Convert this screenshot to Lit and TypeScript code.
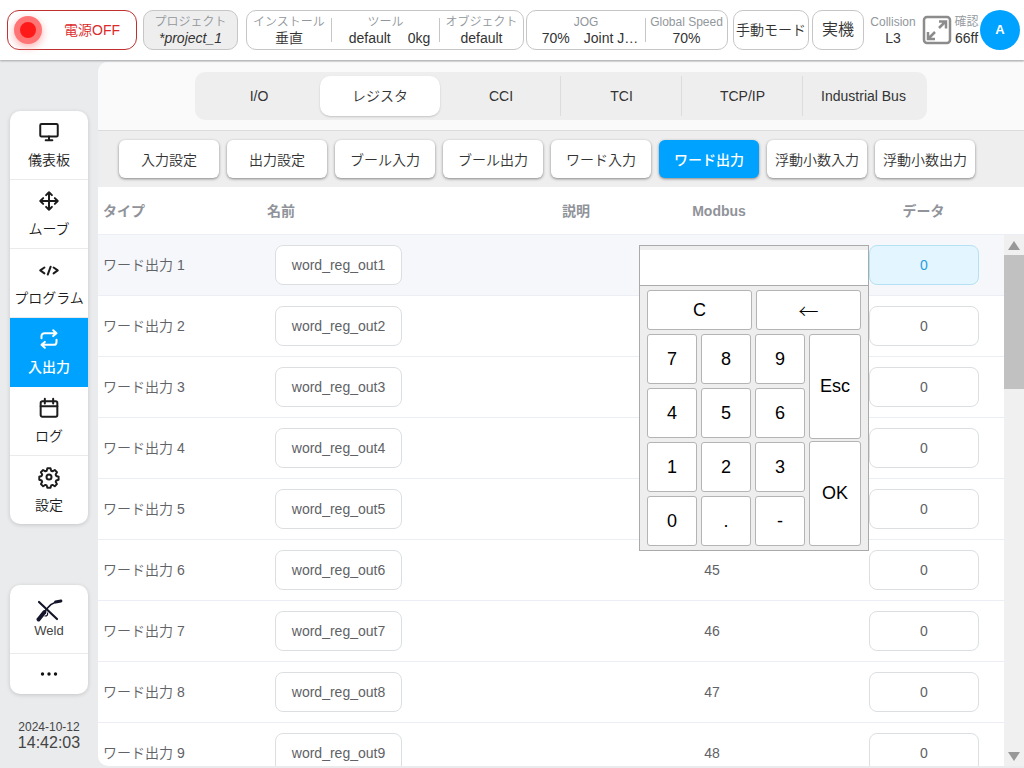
import { LitElement, html, css, svg } from "lit";
import { customElement, property, state } from "lit/decorators.js";
import { classMap } from "lit/directives/class-map.js";

const icons = {
  monitor: svg`<rect x="1.500" y="2.500" width="21" height="15" rx="1.500"/><path d="M12 17.500v4M8 22h8"/>`,
  move: svg`<path d="M12 1.500v21M1.500 12h21M8.500 5 12 1.500 15.500 5M8.500 19l3.500 3.500 3.500-3.500M5 8.500 1.500 12 5 15.500M19 8.500l3.500 3.500-3.500 3.500"/>`,
  code: svg`<path d="M6.500 9 1.500 12.500l5 3.500M17.500 9l5 3.500-5 3.500M14 8l-3.500 9.500"/>`,
  repeat: svg`<path d="M17 1.500 21 5l-4 3.500M3 11V8.500A3.500 3.500 0 0 1 6.500 5H21M7 22.500 3 19l4-3.500M21 13v2.500a3.500 3.500 0 0 1-3.500 3.500H3"/>`,
  calendar: svg`<rect x="2" y="4" width="20" height="18.500" rx="2"/><path d="M2 10h20M7 1v5.500M17 1v5.500"/>`,
  gear: svg`<path d="M10 1.500h4l.8 3.100 1.700.7 2.800-1.600 2.800 2.800-1.700 2.800.7 1.700 3 .9v3.700l-3 .9-.7 1.700 1.600 2.700-2.700 2.700-2.800-1.700-1.700.7-.8 2.900h-4l-.8-2.900-1.700-.7-2.800 1.700-2.700-2.700 1.600-2.700-.7-1.700-3-.9v-3.700l3-.9.7-1.700-1.700-2.800 2.800-2.800 2.800 1.600 1.700-.7z" transform="translate(.4 0) scale(.96 .98)"/><circle cx="12" cy="12" r="3"/>`,
};

type IconName = keyof typeof icons;

@customElement("side-icon")
class SideIcon extends LitElement {
  @property() name: IconName = "monitor";
  static styles = css`
    :host { display: block; height: 20px; }
    svg { display: block; width: 20px; height: 20px; overflow: visible; fill: none; stroke: currentColor; stroke-width: 2.400; stroke-linecap: round; stroke-linejoin: round; }
  `;
  render() {
    return html`<svg viewBox="0 0 24 24" aria-hidden="true">${icons[this.name]}</svg>`;
  }
}

@customElement("num-pad")
class NumPad extends LitElement {
  @state() value = "";
  static styles = css`
    :host { display: block; box-sizing: border-box; width: 230px; padding-top: 4px; border: 1px solid #aaa; background: #eee; }
    * { box-sizing: border-box; }
    .display { display: block; width: 100%; height: 36px; margin: 0; padding: 0 8px; border: 0; border-bottom: 1px solid #aaa; background: #fff; font: 20px "Liberation Sans", sans-serif; text-align: right; outline: none; }
    .keys { display: grid; gap: 4px; padding: 4px 7px; }
    .top { display: grid; grid-template-columns: 1fr 1fr; grid-auto-rows: 40px; gap: 4px; }
    .bottom { display: grid; grid-template-columns: 1fr 52px; gap: 4px; }
    .digits { display: grid; grid-template-columns: repeat(3, 1fr); grid-auto-rows: 50px; gap: 4px; }
    .actions { display: grid; grid-auto-rows: 1fr; gap: 2px; }
    button { margin: 0; padding: 0; border: 1px solid #b4b4b4; border-radius: 3px; background: #fff; color: #000; font: 18px "Liberation Sans", "Noto Sans CJK JP", sans-serif; }
    .back { font-family: "Noto Sans CJK JP", sans-serif; font-size: 20px; font-weight: 300; }
  `;
  private press(key: string) { this.value += key; }
  render() {
    return html`
      <input class="display" aria-label="入力値" .value=${this.value}>
      <div class="keys">
        <div class="top">
          <button @click=${() => (this.value = "")}>C</button>
          <button class="back" @click=${() => (this.value = this.value.slice(0, -1))}>←</button>
        </div>
        <div class="bottom">
          <div class="digits">
            ${["7", "8", "9", "4", "5", "6", "1", "2", "3", "0", ".", "-"].map(
              (k) => html`<button @click=${() => this.press(k)}>${k}</button>`
            )}
          </div>
          <div class="actions"><button>Esc</button><button>OK</button></div>
        </div>
      </div>`;
  }
}

@customElement("app-root")
class AppRoot extends LitElement {
  @state() menu = "入出力";
  @state() tab = "レジスタ";
  @state() page = "ワード出力";

  private menus: [IconName, string][] = [
    ["monitor", "儀表板"], ["move", "ムーブ"], ["code", "プログラム"],
    ["repeat", "入出力"], ["calendar", "ログ"], ["gear", "設定"],
  ];
  private tabs = ["I/O", "レジスタ", "CCI", "TCI", "TCP/IP", "Industrial Bus"];
  private pages = ["入力設定", "出力設定", "ブール入力", "ブール出力", "ワード入力", "ワード出力", "浮動小数入力", "浮動小数出力"];
  private rows = Array.from({ length: 9 }, (_, i) => ({ id: i + 1, modbus: 40 + i }));

  static styles = css`
    :host { display: flex; flex-direction: column; height: 100vh; overflow: hidden; background: #e9ebed; color: #333; font: 350 14px/16px "Liberation Sans", "Noto Sans CJK JP", sans-serif; }
    * { box-sizing: border-box; }
    button, input { margin: 0; font: inherit; color: inherit; }
    button { padding: 0; border: 0; background: none; }

    .bar { display: flex; align-items: center; flex: none; height: 60px; padding: 0 4px 0 7px; background: #fff; box-shadow: 0 1px 2px rgba(0, 0, 0, 0.3); z-index: 1; }
    .pill { display: flex; flex: none; align-items: center; justify-content: center; height: 40px; border: 1px solid #c6c6c6; border-radius: 10px; white-space: nowrap; }
    .power { width: 130px; justify-content: flex-start; gap: 22px; padding-left: 6px; margin-right: 6px; border-color: #c0302e; border-radius: 12px; color: #dc2a2a; }
    .lamp { width: 28px; height: 28px; border: 6px solid #ff7474; border-radius: 50%; background: #ff1a1a; box-shadow: 0 3px 8px #ffb0b0; }
    .project { flex-direction: column; width: 95px; margin-right: 8px; background: #eee; }
    .project .value { font-style: italic; }
    .info { flex: 1 0 auto; }
    .info + .info { margin: 0 5px 0 2px; }
    .cell { display: flex; flex: 1 0 auto; flex-direction: column; align-items: center; width: 84px; }
    .cell + .cell { border-left: 1px solid #c6c6c6; height: 24px; justify-content: center; }
    .tool { width: 108px; }
    .jog { width: 118px; }
    .speed { width: 82px; }
    .label { height: 16px; color: #92979c; font-size: 12px; white-space: nowrap; }
    .value { display: flex; height: 16px; white-space: nowrap; }
    .tool .value { gap: 17px; padding-left: 8px; }
    .jog .value { gap: 14px; padding-left: 8px; }
    .mode { width: 76px; margin-right: 3px; }
    .real { width: 52px; font-size: 16px; }
    .stack { display: flex; flex: none; flex-direction: column; align-items: center; justify-content: center; height: 40px; }
    .collision { width: 58px; }
    .expand { width: 30px; height: 30px; margin-right: 2px; }
    .expand svg { display: block; }
    .check { width: 25px; }
    .avatar { width: 40px; height: 40px; margin-left: 1px; border-radius: 50%; background: #00a2ff; color: #fff; font-size: 13px; font-weight: 700; }

    .body { display: flex; flex: 1; min-height: 0; padding: 2px 0; }
    .side { flex: none; width: 98px; padding: 49px 10px 0; }
    .card { display: flex; flex-direction: column; overflow: hidden; border-radius: 10px; background: #fff; box-shadow: 0 1px 4px rgba(0, 0, 0, 0.16); }
    .card + .card { margin-top: 61px; }
    .item { display: flex; flex-direction: column; align-items: center; gap: 10px; height: 69px; padding-top: 11px; border-bottom: 1px solid #e8eaec; color: #1c1c1c; white-space: nowrap; }
    .item:last-child { height: 68px; border: 0; }
    .item.on { border-color: #00a2ff; background: #00a2ff; color: #fff; font-weight: 500; }
    .item.weld { gap: 0; padding-top: 13px; color: #444; font-size: 13px; }
    .card .item.more { height: 40px; padding: 0; justify-content: center; }
    .clock { display: flex; flex-direction: column; align-items: center; padding-top: 25px; color: #444; }
    .date { font-size: 12px; }
    .time { font-size: 16px; }

    .main { display: flex; flex: 1; flex-direction: column; min-width: 0; overflow: hidden; border-radius: 10px 0 0 10px; background: #fff; }
    .tabs { display: flex; flex: none; justify-content: center; padding: 10px 0; border-bottom: 1px solid #dcdcdc; background: #fafafa; }
    .segments { display: flex; gap: 1px; height: 48px; padding: 4px 3px 4px 4px; border-radius: 10px; background: #eee; }
    .tab { width: 120px; border-radius: 10px; }
    .tab.on { background: #fff; box-shadow: 0 1px 2px rgba(0, 0, 0, 0.18); }
    .sep { width: 122px; margin-left: -2px; border-left: 1px solid #dcdcdc; border-radius: 0; }
    .pages { display: flex; flex: none; gap: 8px; height: 56px; padding: 9px 21px; background: #eee; }
    .page { width: 100px; padding-top: 2px; border-radius: 6px; background: #fff; box-shadow: 0 1px 3px rgba(0, 0, 0, 0.45); white-space: nowrap; }
    .page.on { background: #00a2ff; color: #fff; font-weight: 500; }

    .list { display: flex; flex: 1; min-height: 0; }
    .view { flex: 1; min-width: 0; overflow: hidden; }
    table { width: 100%; border-collapse: separate; border-spacing: 0; table-layout: fixed; color: #606266; }
    th, td { height: 61px; padding: 0 6px; border-bottom: 1px solid #ebeef5; text-align: center; }
    th { height: 48px; color: #909399; font-weight: 700; }
    .first { padding-left: 5px; text-align: left; }
    th.name { padding-left: 7px; text-align: left; }
    td.name { padding-left: 15px; text-align: left; }
    th.modbus { padding-left: 20px; }
    .data { padding-left: 56px; padding-right: 0; }
    th.data { padding-left: 61px; }
    .c1 { width: 162px; }
    .c2 { width: 250px; }
    .c4 { width: 140px; }
    .c5 { width: 222px; }
    .active td { background: #f5f7fb; }
    .field { display: block; width: 127px; height: 40px; padding: 0 12px; border: 1px solid #dcdfe2; border-radius: 8px; background: #fff; text-align: center; outline: none; }
    .num { width: 110px; }
    .active .num { border-color: #b5e1f5; background: #e3f5fe; color: #2a9de0; }
    .anchor { position: relative; width: 110px; margin-left: 31px; }
    num-pad { position: absolute; top: 0; right: 100%; z-index: 2; }

    .scroll { display: flex; flex: none; flex-direction: column; width: 20px; }
    .corner { height: 48px; border-bottom: 1px solid #ebeef5; }
    .arrow { display: flex; align-items: center; justify-content: center; height: 20px; background: #f0f0f0; }
    .track { flex: 1; background: #f0f0f0; }
    .thumb { height: 134px; background: #c1c1c1; }
  `;

  render() {
    return html`
      <header class="bar">
        <button class="pill power"><span class="lamp"></span><span>電源OFF</span></button>
        <button class="pill project"><span class="label">プロジェクト</span><span class="value">*project_1</span></button>
        <div class="pill info">
          <div class="cell"><span class="label">インストール</span><span class="value">垂直</span></div>
          <div class="cell tool"><span class="label">ツール</span><span class="value"><span>default</span><span>0kg</span></span></div>
          <div class="cell"><span class="label">オブジェクト</span><span class="value">default</span></div>
        </div>
        <div class="pill info">
          <div class="cell jog"><span class="label">JOG</span><span class="value"><span>70%</span><span>Joint J…</span></span></div>
          <div class="cell speed"><span class="label">Global Speed</span><span class="value">70%</span></div>
        </div>
        <button class="pill mode">手動モード</button>
        <button class="pill real">実機</button>
        <div class="stack collision"><span class="label">Collision</span><span class="value">L3</span></div>
        <button class="expand" aria-label="全画面">
          <svg width="30" height="30" viewBox="0 0 30 30" fill="none" stroke="#8c8c8c">
            <rect x="2" y="2" width="26" height="26" rx="3" stroke-width="2.500" />
            <path d="M17 13 23.500 6.500M17 6.500h7v7M13 17 6.500 23.500M6 17v7h7" stroke-width="2.500" />
          </svg>
        </button>
        <div class="stack check"><span class="label">確認</span><span class="value">66ff</span></div>
        <button class="avatar">A</button>
      </header>
      <div class="body">
        <aside class="side">
          <nav class="card">
            ${this.menus.map(([icon, text]) => html`
              <button class=${classMap({ item: true, on: this.menu === text })} @click=${() => (this.menu = text)}>
                <side-icon name=${icon}></side-icon><span>${text}</span>
              </button>`)}
          </nav>
          <div class="card">
            <button class="item weld">
              <svg width="28" height="25" viewBox="0 0 28 25" fill="none" stroke="#14142b" stroke-linecap="round" aria-hidden="true">
                <path d="M4 4 22 21" stroke-width="2.200" />
                <path d="M3.500 21.500 9.500 14" stroke-width="4" />
                <path d="M10.500 12.500 13 9.500C15 7 17 5.500 20 4.500" stroke-width="1.600" />
                <path d="M20.500 4 26 3" stroke-width="2.800" />
                <path d="M10 18c2 0 3-1 2.500-3" stroke-width="1.200" />
              </svg>
              <span>Weld</span>
            </button>
            <button class="item more" aria-label="その他">
              <svg width="18" height="4" viewBox="0 0 18 4" fill="#111"><circle cx="2.500" cy="2" r="1.700" /><circle cx="9" cy="2" r="1.700" /><circle cx="15.500" cy="2" r="1.700" /></svg>
            </button>
          </div>
          <div class="clock"><span class="date">2024-10-12</span><span class="time">14:42:03</span></div>
        </aside>
        <main class="main">
          <div class="tabs">
            <nav class="segments">
              ${this.tabs.map((t, i) => html`
                <button class=${classMap({ tab: true, on: this.tab === t, sep: i > 2 })} @click=${() => (this.tab = t)}>${t}</button>`)}
            </nav>
          </div>
          <nav class="pages">
            ${this.pages.map((p) => html`
              <button class=${classMap({ page: true, on: this.page === p })} @click=${() => (this.page = p)}>${p}</button>`)}
          </nav>
          <div class="list">
            <div class="view">
              <table>
                <colgroup><col class="c1"><col class="c2"><col><col class="c4"><col class="c5"></colgroup>
                <thead>
                  <tr>
                    <th class="first" scope="col">タイプ</th>
                    <th class="name" scope="col">名前</th>
                    <th scope="col">説明</th>
                    <th class="modbus" scope="col">Modbus</th>
                    <th class="data" scope="col">データ</th>
                  </tr>
                </thead>
                <tbody>
                  ${this.rows.map((r) => html`
                    <tr class=${classMap({ active: r.id === 1 })}>
                      <td class="first">ワード出力 ${r.id}</td>
                      <td class="name"><input class="field" aria-label="名前 ${r.id}" value="word_reg_out${r.id}"></td>
                      <td></td>
                      <td>${r.id > 5 ? r.modbus : ""}</td>
                      <td class="data">
                        <div class="anchor">
                          <input class="field num" aria-label="データ ${r.id}" value="0">
                          ${r.id === 1 ? html`<num-pad></num-pad>` : ""}
                        </div>
                      </td>
                    </tr>`)}
                </tbody>
              </table>
            </div>
            <div class="scroll" aria-hidden="true">
              <div class="corner"></div>
              <div class="arrow"><svg width="12" height="9"><path d="M0 9 6 0l6 9z" fill="#989898" /></svg></div>
              <div class="track"><div class="thumb"></div></div>
              <div class="arrow"><svg width="12" height="9"><path d="M0 0h12L6 9z" fill="#989898" /></svg></div>
            </div>
          </div>
        </main>
      </div>`;
  }
}
